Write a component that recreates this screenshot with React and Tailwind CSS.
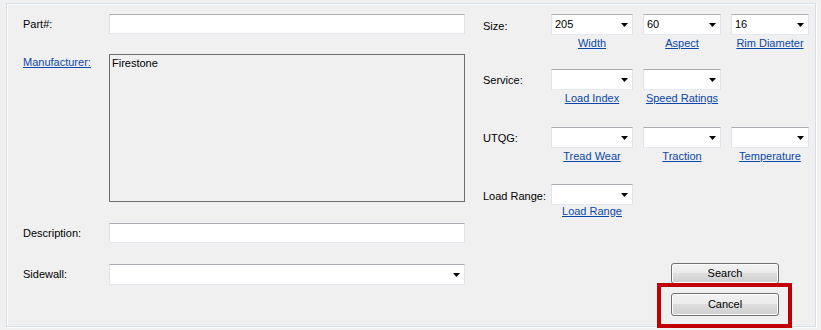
import React from 'react'

const font = { fontFamily: '"Liberation Sans", Arial, sans-serif' }

// Win7-ish sunken field border: darker top edge, pale sides/bottom.
const field = 'border border-[#e2e3ea] border-t-[#abadb3] border-b-[#e3e9ef] bg-white'
const link = 'text-[11px] leading-[13px] text-[#0b47a8] underline'

const Arrow = () => (
  <svg width="7" height="4" viewBox="0 0 7 4" className="shrink-0">
    <polygon points="0,0 7,0 3.5,4" fill="#000" />
  </svg>
)

const Combo = ({ value, className }) => (
  <div className={`${field} flex h-[21px] items-center justify-between pl-[3px] pr-[4px] ${className}`}>
    <span className="text-[11px] leading-none text-black">{value}</span>
    <Arrow />
  </div>
)

// A dropdown with its underlined caption centred beneath it.
const Pick = ({ value, label, w }) => (
  <div className={`flex flex-col items-center ${w}`}>
    <Combo value={value} className="w-full" />
    <span className={`${link} mt-[2px]`}>{label}</span>
  </div>
)

const Btn = ({ children, h }) => (
  <button
    type="button"
    className={`${h} w-[108px] rounded-[3px] border border-[#707070] bg-[linear-gradient(#f2f2f2_0%,#ebebeb_50%,#dddddd_50%,#cfcfcf_100%)] text-[11px] text-black shadow-[inset_0_0_0_1px_#fcfcfc]`}
  >
    {children}
  </button>
)

export default function App() {
  return (
    <div className="relative h-[330px] w-[821px] overflow-hidden bg-[#f0f0f0] pl-[6px] pt-[3px]" style={font}>
      <div className="flex h-[324px] w-[810px] border border-[#d5dfe5] shadow-[inset_1px_1px_0_#ffffff,1px_1px_0_#ffffff]">
        {/* left column */}
        <div className="flex w-[463px] flex-col pl-[16px]">
          <div className="mt-[10px] flex items-center">
            <span className="w-[86px] text-[11px] text-black">Part#:</span>
            <div className={`${field} h-[20px] w-[356px]`} />
          </div>

          <div className="mt-[20px] flex items-start">
            <span className={`${link} w-[86px] pt-[2px]`}>Manufacturer:</span>
            <div className="h-[148px] w-[356px] border border-[#6d6d6d] bg-[#f0f0f0] px-[2px] pt-[2px]">
              <div className="text-[11px] leading-[13px] text-black">Firestone</div>
            </div>
          </div>

          <div className="mt-[21px] flex items-center">
            <span className="w-[86px] text-[11px] text-black">Description:</span>
            <div className={`${field} h-[20px] w-[356px]`} />
          </div>

          <div className="mt-[21px] flex items-center">
            <span className="w-[86px] text-[11px] text-black">Sidewall:</span>
            <Combo value="" className="w-[356px]" />
          </div>
        </div>

        {/* right column */}
        <div className="flex flex-col pl-[13px]">
          <div className="mt-[10px] flex items-start">
            <span className="w-[68px] pt-[6px] text-[11px] leading-[13px] text-black">Size:</span>
            <div className="flex gap-[10px]">
              <Pick value="205" label="Width" w="w-[82px]" />
              <Pick value="60" label="Aspect" w="w-[78px]" />
              <Pick value="16" label="Rim Diameter" w="w-[78px]" />
            </div>
          </div>

          <div className="mt-[19px] flex items-start">
            <span className="w-[68px] pt-[5px] text-[11px] leading-[13px] text-black">Service:</span>
            <div className="flex gap-[10px]">
              <Pick value="" label="Load Index" w="w-[82px]" />
              <Pick value="" label="Speed Ratings" w="w-[78px]" />
            </div>
          </div>

          <div className="mt-[22px] flex items-start">
            <span className="w-[68px] pt-[5px] text-[11px] leading-[13px] text-black">UTQG:</span>
            <div className="flex gap-[10px]">
              <Pick value="" label="Tread Wear" w="w-[82px]" />
              <Pick value="" label="Traction" w="w-[78px]" />
              <Pick value="" label="Temperature" w="w-[78px]" />
            </div>
          </div>

          <div className="mt-[21px] flex items-start">
            <span className="w-[68px] pt-[6px] text-[11px] leading-[13px] text-black">Load Range:</span>
            <div className="flex w-[82px] flex-col items-center">
              <Combo value="" className="w-full" />
              <span className={link}>Load Range</span>
            </div>
          </div>

          <div className="ml-[188px] mt-[45px] flex flex-col gap-[9px]">
            <Btn h="h-[21px]">Search</Btn>
            <Btn h="h-[23px]">Cancel</Btn>
          </div>
        </div>
      </div>

      {/* red highlight annotation over the Cancel button */}
      <div className="pointer-events-none absolute left-[657px] top-[283px] h-[45px] w-[135px] border-[4px] border-[#c00000]" />
    </div>
  )
}
